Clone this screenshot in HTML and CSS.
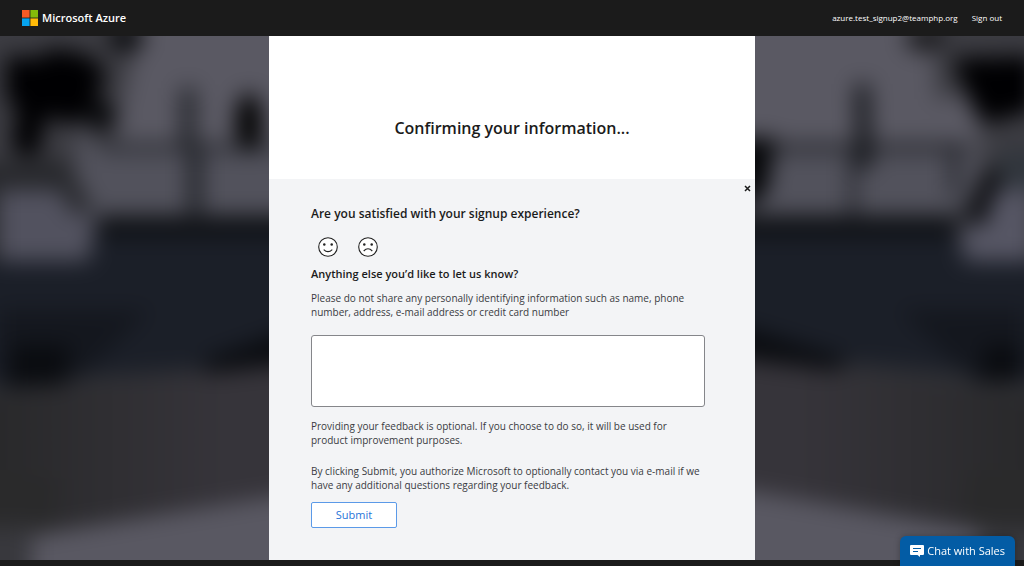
FILE: index.html
```html
<!DOCTYPE html>
<html lang="en">
<head>
<meta charset="utf-8">
<meta name="viewport" content="width=device-width, initial-scale=1">
<title>Microsoft Azure</title>
<link rel="stylesheet" href="styles.css">
</head>
<body class="page">
<header class="topbar">
  <a class="brand" href="#">
    <svg class="brand-mark" viewBox="0 0 16 16" aria-hidden="true">
      <path fill="#f65a25" d="M0 0h7.6v7.6H0z"/><path fill="#84bb0a" d="M8.4 0H16v7.6H8.4z"/>
      <path fill="#06a4f0" d="M0 8.4h7.6V16H0z"/><path fill="#ffba08" d="M8.4 8.4H16V16H8.4z"/>
    </svg>
    <span>Microsoft Azure</span>
  </a>
  <nav class="account">
    <span>azure.test_signup2@teamphp.org</span>
    <a href="#">Sign out</a>
  </nav>
</header>

<main class="stage">
  <svg class="backdrop" viewBox="0 36 1024 524" preserveAspectRatio="none" aria-hidden="true">
    <defs>
      <filter id="soft" filterUnits="userSpaceOnUse" x="-60" y="-24" width="1144" height="644" color-interpolation-filters="sRGB"><feGaussianBlur stdDeviation="11"/></filter>
      <linearGradient id="floor" gradientUnits="userSpaceOnUse" x1="0" y1="0" x2="1024" y2="0">
        <stop offset="0" stop-color="#29292b"/><stop offset=".22" stop-color="#36343a"/>
        <stop offset=".78" stop-color="#36343a"/><stop offset="1" stop-color="#29292b"/>
      </linearGradient>
    </defs>
    <g filter="url(#soft)">
      <path fill="#303136" d="M-60-24h1144v644H-60z"/>
      <path fill="#3c3c42" d="M-60-24h1144v200H-60z"/>
      <path fill="#5a5963" d="M148 0H310V143H116L122 105Z"/>
      <path fill="#52525c" d="M76 124L102 150H310V214H90L76 190Z"/>
      <path fill="#5a5963" d="M720 0H932L936 100 966 94 985 143H720Z"/>
      <path fill="#52525c" d="M720 150H985L970 205 950 214H720Z"/>
      <path fill="#27282c" d="M-60 165L66 160 96 215 80 270H-60Z"/>
      <path fill="#0e1014" d="M90 217H310V240H90ZM720 217H955L960 245H720Z"/>
      <path fill="#1b1f28" d="M90 236H310V362L-60 385V260H85ZM720 236H955L970 260H1084V385L720 350Z"/>
      <path fill="#14171e" d="M0 310H150L80 378 0 390ZM900 310H1024V380L975 382Z"/>
      <path fill="#0a0c10" d="M205 360L300 326V366L205 374ZM720 320L850 360 830 374 720 360ZM12 345H70L65 385 10 387ZM985 345H1020V382H980Z"/>
      <path fill="url(#floor)" d="M-60 402L310 362V620H-60ZM720 356L1084 402V620H720Z"/>
      <path fill="#2a2a2b" d="M-60 460L60 480 50 535H-60ZM970 470H1084V540L960 522Z"/>
      <path fill="#595862" d="M25 536L310 491V620H25ZM720 486L1000 533V620H720Z"/>
      <path fill="#38383d" d="M-60 530L32 526V620H-60ZM980 528H1084V620H980Z"/>
      <path fill="#000002" d="M6 56L40 58 50 48 85 54 106 70 98 98 76 126 46 116 38 157 12 152 17 108 6 98Z"/>
      <circle cx="101" cy="116" r="14" fill="#050608"/>
      <path fill="#52525f" d="M-2 190H60L72 213H98L89 261H-2Z"/>
      <path fill="#202227" d="M181 88h14v59h-14zM188 148h14v65h-14zM105 144H275v7H105z"/>
      <ellipse cx="249" cy="122" rx="13" ry="29" fill="#000"/>
      <ellipse cx="126" cy="38" rx="18" ry="14" fill="#0e0f12"/>
      <path fill="#14161a" d="M855 84h14l3 84h-15zM750 145H965v6H750zM850 155h6v60h-6zM951 150h7v45h-7z"/>
      <path fill="#050608" d="M730 138h45l-8 54-27 22z"/>
      <ellipse cx="925" cy="38" rx="20" ry="14" fill="#1d1d20"/>
      <path fill="#000002" d="M952 58L1034 56V110L985 124 968 97Z"/>
      <path fill="#31363d" d="M1000 150H1054V192H998Z"/>
      <path fill="#0b0c0f" d="M992 162L1004 188 984 224 963 216Z"/>
      <path fill="#565664" d="M996 189H1034V261H964L959 226 984 226Z"/>
    </g>
  </svg>

  <section class="dialog">
    <div class="status"><h1 class="status-title">Confirming your information...</h1></div>
    <form class="survey">
      <button class="close" type="button" aria-label="Close">
        <svg viewBox="0 0 7 7" aria-hidden="true"><path d="M1 1l5 5M6 1L1 6" fill="none" stroke="currentColor" stroke-width="1.5"/></svg>
      </button>
      <h2 class="question" id="rating">Are you satisfied with your signup experience?</h2>
      <div class="faces" role="group" aria-labelledby="rating">
        <button class="face" type="button" aria-label="Satisfied">
          <svg viewBox="0 0 20 20" aria-hidden="true">
            <circle cx="10" cy="10" r="9.3" fill="#fff" stroke="#222" stroke-width="1.1"/>
            <circle cx="6.3" cy="7.6" r="1.25" fill="#222"/><circle cx="13.7" cy="7.6" r="1.25" fill="#222"/>
            <path d="M5.7 12.6q4.3 4.1 8.6 0" fill="none" stroke="#222" stroke-width="1.1"/>
          </svg>
        </button>
        <button class="face" type="button" aria-label="Dissatisfied">
          <svg viewBox="0 0 20 20" aria-hidden="true">
            <circle cx="10" cy="10" r="9.3" fill="#fff" stroke="#222" stroke-width="1.1"/>
            <circle cx="6.3" cy="7.6" r="1.25" fill="#222"/><circle cx="13.7" cy="7.6" r="1.25" fill="#222"/>
            <path d="M5.7 14q4.3-4.6 8.6 0" fill="none" stroke="#222" stroke-width="1.1"/>
          </svg>
        </button>
      </div>
      <label class="prompt" for="comments">Anything else you’d like to let us know?</label>
      <p class="note" id="privacy">Please do not share any personally identifying information such as name, phone number, address, e-mail address or credit card number</p>
      <textarea class="comments" id="comments" aria-describedby="privacy"></textarea>
      <p class="note">Providing your feedback is optional. If you choose to do so, it will be used for product improvement purposes.</p>
      <p class="note note-consent">By clicking Submit, you authorize Microsoft to optionally contact you via e-mail if we have any additional questions regarding your feedback.</p>
      <button class="submit" type="submit">Submit</button>
    </form>
  </section>
</main>
<footer class="footer"></footer>

<button class="chat" type="button">
  <svg class="chat-icon" viewBox="0 0 14 12" aria-hidden="true">
    <path fill="#fff" d="M1 0h12q1 0 1 1v8q0 1-1 1h-3v2L7.500 10H1Q0 10 0 9V1Q0 0 1 0z"/>
    <path d="M3 3.500h8M3 6.500h5" stroke="#035ca5" stroke-width="1.100"/>
  </svg>
  <span>Chat with Sales</span>
</button>
</body>
</html>
```

FILE: styles.css
```css
* { box-sizing: border-box; }
.page {
  margin: 0;
  min-height: 100vh;
  display: flex;
  flex-direction: column;
  background: #1b1b1b;
  color: #1b1b1b;
  font: 11px/14px "Open Sans", "Noto Sans", sans-serif;
}
.topbar {
  height: 36px;
  padding: 0 22px;
  display: flex;
  align-items: center;
  justify-content: space-between;
  color: #fff;
}
.topbar a { color: inherit; text-decoration: none; }
.brand {
  display: flex;
  align-items: center;
  gap: 4px;
  font-weight: 600;
}
.brand-mark { width: 16px; height: 16px; }
.account { display: flex; gap: 14px; font-size: 8px; }
.stage {
  position: relative;
  flex: 1;
  display: flex;
  justify-content: center;
}
.backdrop {
  position: absolute;
  inset: 0;
  width: 100%;
  height: 100%;
}
.dialog {
  position: relative;
  width: 100%;
  max-width: 486px;
  display: flex;
  flex-direction: column;
  background: #fff;
}
.status { padding: 80px 24px 39px; text-align: center; }
.status-title { margin: 0; font-size: 16px; line-height: 24px; font-weight: 600; }
.survey {
  position: relative;
  flex: 1;
  padding: 26px 50px 32px 42px;
  background: #f3f4f6;
}
.close {
  position: absolute;
  top: 2px;
  right: 1px;
  width: 14px;
  height: 14px;
  padding: 0;
  display: grid;
  place-items: center;
  border: 0;
  background: none;
  color: #1b1b1b;
}
.close svg { width: 7px; height: 7px; }
.question { margin: 0; font-size: 12px; line-height: 18px; font-weight: 600; }
.faces { display: flex; gap: 20px; padding: 14px 7px 9px; }
.face { width: 20px; height: 20px; padding: 0; border: 0; background: none; }
.face svg { display: block; width: 20px; height: 20px; }
.prompt { display: block; line-height: 16px; font-weight: 600; }
.note { margin: 9px 0 0; color: #3a3b3f; font-size: 10px; }
.comments {
  display: block;
  width: 100%;
  height: 72px;
  margin: 16px 0 12px;
  padding: 6px;
  border: 1px solid #85868a;
  border-radius: 3px;
  background: #fff;
  font: inherit;
  resize: none;
}
.note-consent { margin-top: 17px; }
.submit {
  display: block;
  width: 86px;
  height: 26px;
  margin-top: 10px;
  padding: 0;
  border: 1px solid #5b9ae8;
  border-radius: 2px;
  background: #fff;
  color: #1f74d8;
  font: inherit;
}
.footer { height: 6px; }
.chat {
  position: fixed;
  right: 9px;
  bottom: 0;
  height: 30px;
  padding: 0 10px;
  display: flex;
  align-items: center;
  gap: 3px;
  border: 0;
  border-radius: 6px 6px 0 0;
  background: #035ca5;
  box-shadow: 0 0 6px #0004;
  color: #fff;
  font: inherit;
}
.chat-icon { width: 14px; height: 12px; }
```
